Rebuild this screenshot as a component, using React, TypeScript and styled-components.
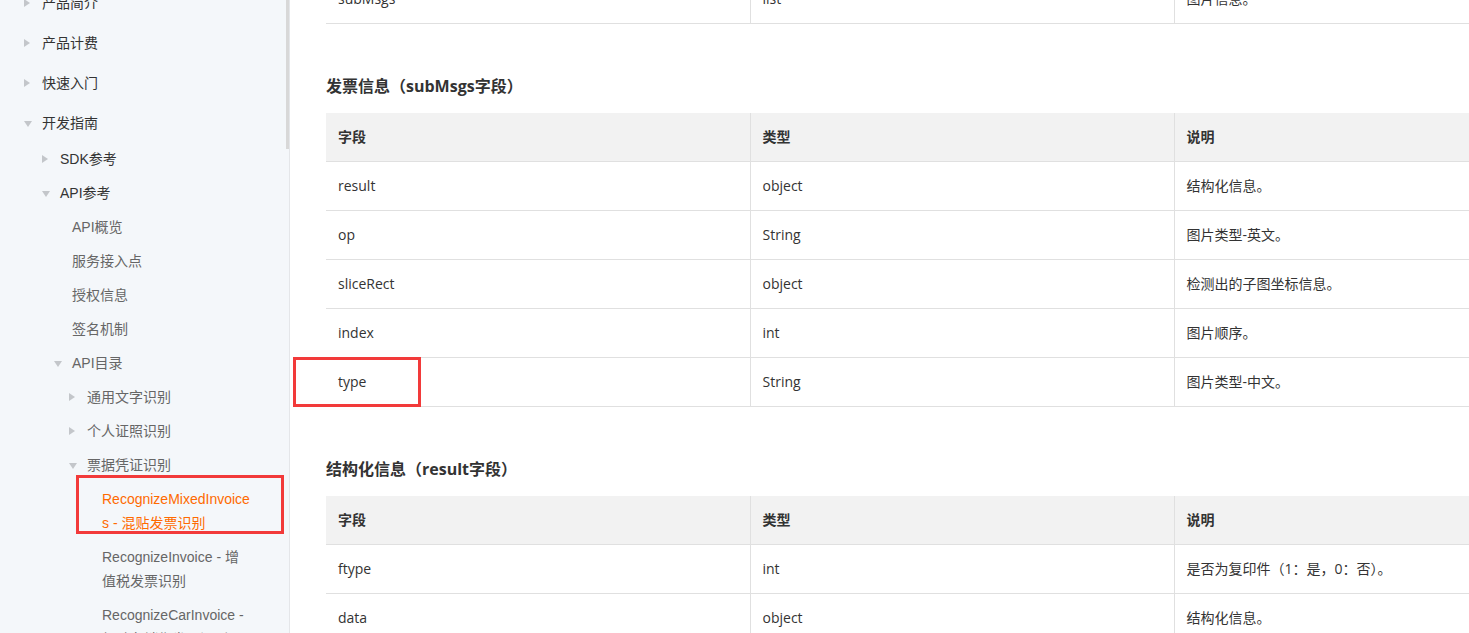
import React from 'react';
import styled, { createGlobalStyle } from 'styled-components';

const GlobalStyle = createGlobalStyle`
  html, body {
    margin: 0;
    padding: 0;
    height: 100%;
    overflow: hidden;
    background: #fff;
  }
  #root {
    height: 100%;
  }
`;

const Page = styled.div`
  display: flex;
  height: 633px;
  overflow: hidden;
`;

const Sidebar = styled.nav`
  position: relative;
  flex: 0 0 289px;
  background: #f4f7fa;
  border-right: 1px solid #e4e6e9;
  overflow: hidden;
  font-family: 'Liberation Sans', 'Noto Sans CJK SC', sans-serif;
  font-size: 14px;
`;

const ScrollThumb = styled.div`
  position: absolute;
  top: 0;
  right: 0;
  width: 3px;
  height: 149px;
  background: #d8d8d8;
`;

const TreeList = styled.ul`
  list-style: none;
  margin: -17px 0 0;
  padding: 0;
`;

const indent = [42, 60, 72, 87, 102];

const TreeItem = styled.li<{ $depth: number; $active?: boolean }>`
  position: relative;
  padding: ${(p) => (p.$depth === 0 ? '5px' : '4px')} 37px
    ${(p) => (p.$depth === 0 ? '5px' : '6px')} ${(p) => indent[p.$depth]}px;
  line-height: ${(p) => (p.$depth === 0 ? 30 : 24)}px;
  color: ${(p) => (p.$active ? '#ff6a00' : p.$depth < 2 ? '#333' : '#666')};
  word-break: break-all;
`;

const Caret = styled.span<{ $open?: boolean }>`
  position: absolute;
  left: -18px;
  top: 50%;
  width: 0;
  height: 0;
  ${(p) =>
    p.$open
      ? `
    margin-top: -2px;
    border-top: 6px solid #c3c6ca;
    border-left: 4px solid transparent;
    border-right: 4px solid transparent;
  `
      : `
    margin-top: -4px;
    border-left: 6px solid #c3c6ca;
    border-top: 4px solid transparent;
    border-bottom: 4px solid transparent;
  `}
`;

const Label = styled.span`
  position: relative;
  display: block;
`;

const Highlight = styled.div<{ $top: number; $left: number; $w: number; $h: number }>`
  position: absolute;
  top: ${(p) => p.$top}px;
  left: ${(p) => p.$left}px;
  width: ${(p) => p.$w}px;
  height: ${(p) => p.$h}px;
  box-sizing: border-box;
  border: 3px solid #f23a3a;
  pointer-events: none;
`;

const Main = styled.main`
  flex: 1;
  overflow: hidden;
  padding-left: 36px;
  font-family: 'Open Sans', 'Noto Sans CJK SC', sans-serif;
  font-size: 14px;
  color: #333;
`;

const Section = styled.section<{ $first?: boolean }>`
  margin-top: ${(p) => (p.$first ? '-25px' : '0')};
`;

const Heading = styled.h3`
  margin: 50px 0 15px;
  font-size: 16px;
  line-height: 24px;
  font-weight: 700;
  color: #333;
`;

const Table = styled.table`
  width: 1272px;
  table-layout: fixed;
  border-collapse: collapse;
`;

const HeadCell = styled.th`
  height: 46px;
  padding: 0 12px 2px;
  background: #f2f2f2;
  text-align: left;
  font-weight: 700;
  border-bottom: 1px solid #e0e0e0;
  & + & {
    border-left: 1px solid #e0e0e0;
  }
`;

const Cell = styled.td`
  position: relative;
  height: 46px;
  padding: 0 12px 2px;
  border-bottom: 1px solid #e0e0e0;
  & + & {
    border-left: 1px solid #e0e0e0;
  }
`;

type Node = { depth: number; text: string; caret?: 'open' | 'closed'; active?: boolean };

const tree: Node[] = [
  { depth: 0, text: '产品简介', caret: 'closed' },
  { depth: 0, text: '产品计费', caret: 'closed' },
  { depth: 0, text: '快速入门', caret: 'closed' },
  { depth: 0, text: '开发指南', caret: 'open' },
  { depth: 1, text: 'SDK参考', caret: 'closed' },
  { depth: 1, text: 'API参考', caret: 'open' },
  { depth: 2, text: 'API概览' },
  { depth: 2, text: '服务接入点' },
  { depth: 2, text: '授权信息' },
  { depth: 2, text: '签名机制' },
  { depth: 2, text: 'API目录', caret: 'open' },
  { depth: 3, text: '通用文字识别', caret: 'closed' },
  { depth: 3, text: '个人证照识别', caret: 'closed' },
  { depth: 3, text: '票据凭证识别', caret: 'open' },
  { depth: 4, text: 'RecognizeMixedInvoices - 混贴发票识别', active: true },
  { depth: 4, text: 'RecognizeInvoice - 增值税发票识别' },
  { depth: 4, text: 'RecognizeCarInvoice - 机动车销售发票识别' },
];

type Row = [string, string, string];

const tables: { title?: string; rows: Row[]; mark?: string }[] = [
  { rows: [['subMsgs', 'list', '图片信息。']] },
  {
    title: '发票信息（subMsgs字段）',
    mark: 'type',
    rows: [
      ['result', 'object', '结构化信息。'],
      ['op', 'String', '图片类型-英文。'],
      ['sliceRect', 'object', '检测出的子图坐标信息。'],
      ['index', 'int', '图片顺序。'],
      ['type', 'String', '图片类型-中文。'],
    ],
  },
  {
    title: '结构化信息（result字段）',
    rows: [
      ['ftype', 'int', '是否为复印件（1：是，0：否）。'],
      ['data', 'object', '结构化信息。'],
    ],
  },
];

const App = () => (
  <>
    <GlobalStyle />
    <Page>
      <Sidebar>
        <TreeList>
          {tree.map((node) => (
            <TreeItem key={node.text} $depth={node.depth} $active={node.active}>
              <Label>
                {node.caret && <Caret $open={node.caret === 'open'} />}
                {node.text}
              </Label>
              {node.active && <Highlight $top={-8} $left={76} $w={208} $h={59} />}
            </TreeItem>
          ))}
        </TreeList>
        <ScrollThumb />
      </Sidebar>
      <Main>
        {tables.map((t, i) => (
          <Section key={i} $first={!t.title}>
            {t.title && <Heading>{t.title}</Heading>}
            <Table>
              {t.title && (
                <thead>
                  <tr>
                    <HeadCell>字段</HeadCell>
                    <HeadCell>类型</HeadCell>
                    <HeadCell>说明</HeadCell>
                  </tr>
                </thead>
              )}
              <tbody>
                {t.rows.map((row) => (
                  <tr key={row[0]}>
                    <Cell>
                      {row[0]}
                      {t.mark === row[0] && <Highlight $top={-1} $left={-33} $w={128} $h={50} />}
                    </Cell>
                    <Cell>{row[1]}</Cell>
                    <Cell>{row[2]}</Cell>
                  </tr>
                ))}
              </tbody>
            </Table>
          </Section>
        ))}
      </Main>
    </Page>
  </>
);

export default App;
